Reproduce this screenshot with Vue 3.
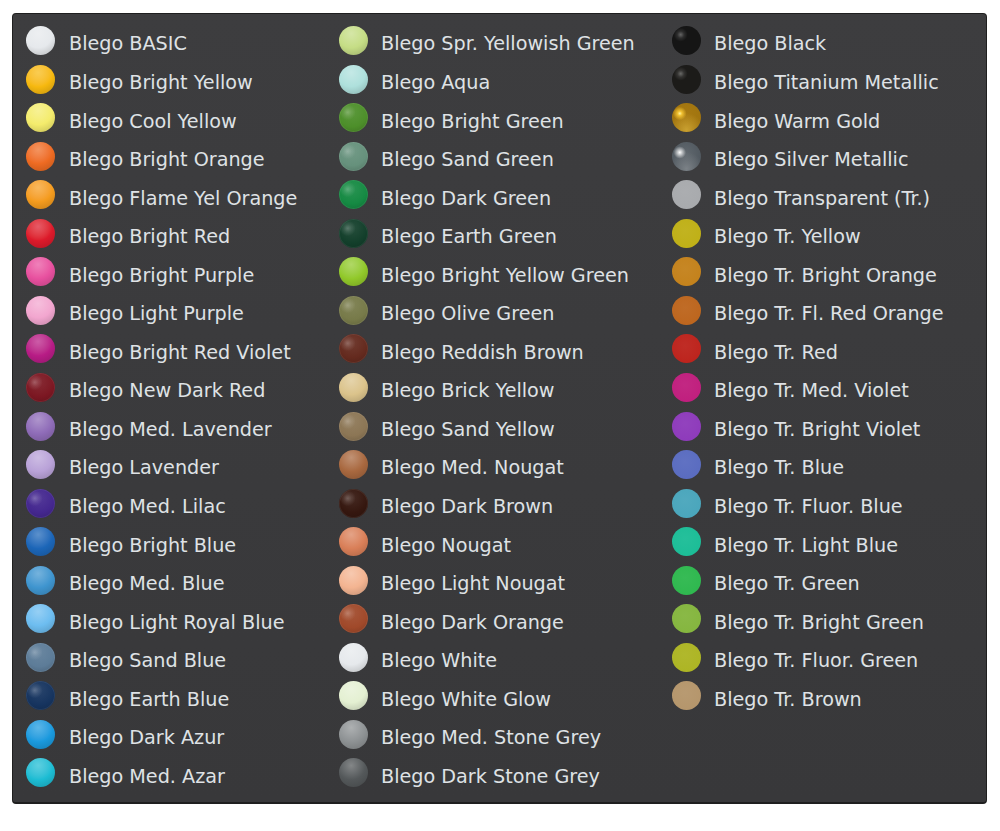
<script setup>
const columns = [
  { width: '313px', items: [
    ['BASIC', '#e6e9ec'], ['Bright Yellow', '#f7b90f'], ['Cool Yellow', '#f4ec6c'], ['Bright Orange', '#ee6b22'],
    ['Flame Yel Orange', '#f59c1e'], ['Bright Red', '#dd1a2b'], ['Bright Purple', '#e8509f'], ['Light Purple', '#f2a6cf'],
    ['Bright Red Violet', '#b81c86'], ['New Dark Red', '#7c1722', 'gloss'], ['Med. Lavender', '#8f6cb8'], ['Lavender', '#b9a2d8'],
    ['Med. Lilac', '#44278f', 'gloss'], ['Bright Blue', '#1c66b8'], ['Med. Blue', '#3f95cf'], ['Light Royal Blue', '#6dbdf0'],
    ['Sand Blue', '#5d7c98', 'gloss'], ['Earth Blue', '#16345f', 'gloss'], ['Dark Azur', '#1a9ade'], ['Med. Azar', '#1dbdd4'],
  ] },
  { width: '333px', items: [
    ['Spr. Yellowish Green', '#c5dd85'], ['Aqua', '#aee0dc'], ['Bright Green', '#4d8f2a', 'gloss'], ['Sand Green', '#66917c', 'gloss'],
    ['Dark Green', '#158a43', 'gloss'], ['Earth Green', '#133f2b', 'gloss'], ['Bright Yellow Green', '#92c92a'], ['Olive Green', '#777a49', 'gloss'],
    ['Reddish Brown', '#642a1e', 'gloss'], ['Brick Yellow', '#dbc38b'], ['Sand Yellow', '#8c7655', 'gloss'], ['Med. Nougat', '#a8683f'],
    ['Dark Brown', '#35170f', 'gloss'], ['Nougat', '#d97f58'], ['Light Nougat', '#f3b491'], ['Dark Orange', '#a0492a', 'gloss'],
    ['White', '#e6e9ec'], ['White Glow', '#e4f0d2'], ['Med. Stone Grey', '#8e9294'], ['Dark Stone Grey', '#54585a'],
  ] },
  { width: 'auto', items: [
    ['Black', '#151515', 'dark'], ['Titanium Metallic', '#1c1b19', 'dark'], ['Warm Gold', '#a0740f', 'metal gold'], ['Silver Metallic', '#50585f', 'metal'],
    ['Transparent (Tr.)', '#a8aaad', 'flat'], ['Tr. Yellow', '#bfb017', 'flat'], ['Tr. Bright Orange', '#c4821c', 'flat'], ['Tr. Fl. Red Orange', '#bd661e', 'flat'],
    ['Tr. Red', '#bd241d', 'flat'], ['Tr. Med. Violet', '#c01f7e', 'flat'], ['Tr. Bright Violet', '#8e3bbb', 'flat'], ['Tr. Blue', '#5a6cc0', 'flat'],
    ['Tr. Fluor. Blue', '#4aa6bc', 'flat'], ['Tr. Light Blue', '#1cbd97', 'flat'], ['Tr. Green', '#2fb84f', 'flat'], ['Tr. Bright Green', '#85b63f', 'flat'],
    ['Tr. Fluor. Green', '#adb524', 'flat'], ['Tr. Brown', '#b5966c', 'flat'],
  ] },
]
</script>

<template>
  <main class="page">
    <section class="panel">
      <ul v-for="col in columns" :key="col.items[0][0]" class="column" :style="{ width: col.width }">
        <li v-for="item in col.items" :key="item[0]" class="row">
          <span class="ball" :class="item[2]" :style="{ '--c': item[1] }"></span>
          <span class="label">Blego {{ item[0] }}</span>
        </li>
      </ul>
    </section>
  </main>
</template>

<style>
html, body { background: #fff; }
</style>

<style scoped>
.page {
  width: 1000px;
  height: 831px;
  padding: 13px 13px 0 12px;
  box-sizing: border-box;
}
.panel {
  display: flex;
  width: 975px;
  height: 791px;
  box-sizing: border-box;
  padding: 10.8px 0 0 13px;
  background: linear-gradient(#3d3d3f, #38383a);
  border: 1px solid #1f1f1f;
  border-bottom-width: 2px;
  border-radius: 4px;
  font-family: "DejaVu Sans", sans-serif;
  font-size: 19.2px;
  color: #dfe2e5;
}
.column {
  margin: 0;
  padding: 0;
  list-style: none;
  flex: none;
}
.column + .column .ball {
  margin-right: 13px;
}
.row {
  display: flex;
  align-items: center;
  height: 38.55px;
}
.ball {
  position: relative;
  flex: none;
  width: 29px;
  height: 29px;
  margin-top: -7px;
  margin-right: 14px;
  border-radius: 50%;
  background:
    radial-gradient(circle at 42% 26%,
      color-mix(in srgb, var(--c) 72%, #fff) 0%,
      var(--c) 52%,
      color-mix(in srgb, var(--c) 84%, #000) 88%,
      color-mix(in srgb, var(--c) 66%, #000) 100%);
}
.ball.gloss {
  background:
    radial-gradient(circle at 30% 32%, rgba(255, 255, 255, .26) 0, rgba(255, 255, 255, .1) 14%, transparent 28%),
    radial-gradient(circle at 46% 30%,
      color-mix(in srgb, var(--c) 92%, #fff) 0%,
      var(--c) 58%,
      color-mix(in srgb, var(--c) 78%, #000) 100%);
  box-shadow: inset 0 0 0 1px rgba(255, 255, 255, .07);
}
.ball.dark {
  background:
    radial-gradient(circle at 30% 30%, rgba(255, 255, 255, .34) 0, rgba(255, 255, 255, .1) 12%, transparent 24%),
    radial-gradient(circle at 50% 50%, var(--c) 0%, var(--c) 84%, #525254 97%, #47474a 100%);
}
.ball.metal {
  background:
    radial-gradient(circle at 27% 36%, #fff 0, color-mix(in srgb, var(--c) 30%, #fff) 7%, transparent 22%),
    radial-gradient(circle at 50% 92%, color-mix(in srgb, var(--c) 75%, #fff) 0, transparent 55%),
    radial-gradient(circle at 45% 40%, color-mix(in srgb, var(--c) 90%, #fff) 0%, var(--c) 70%, color-mix(in srgb, var(--c) 70%, #000) 100%);
}
.ball.metal.gold {
  background:
    radial-gradient(circle at 27% 36%, #fff3a0 0, #f0c030 8%, transparent 24%),
    radial-gradient(circle at 50% 92%, #c9a030 0, transparent 55%),
    radial-gradient(circle at 45% 40%, #a87a12 0%, var(--c) 70%, #6e4e0c 100%);
}
.ball.flat {
  background: radial-gradient(circle at 45% 40%, color-mix(in srgb, var(--c) 96%, #fff) 0%, var(--c) 72%, color-mix(in srgb, var(--c) 90%, #000) 100%);
}
.label {
  white-space: nowrap;
  line-height: 1;
}
</style>
